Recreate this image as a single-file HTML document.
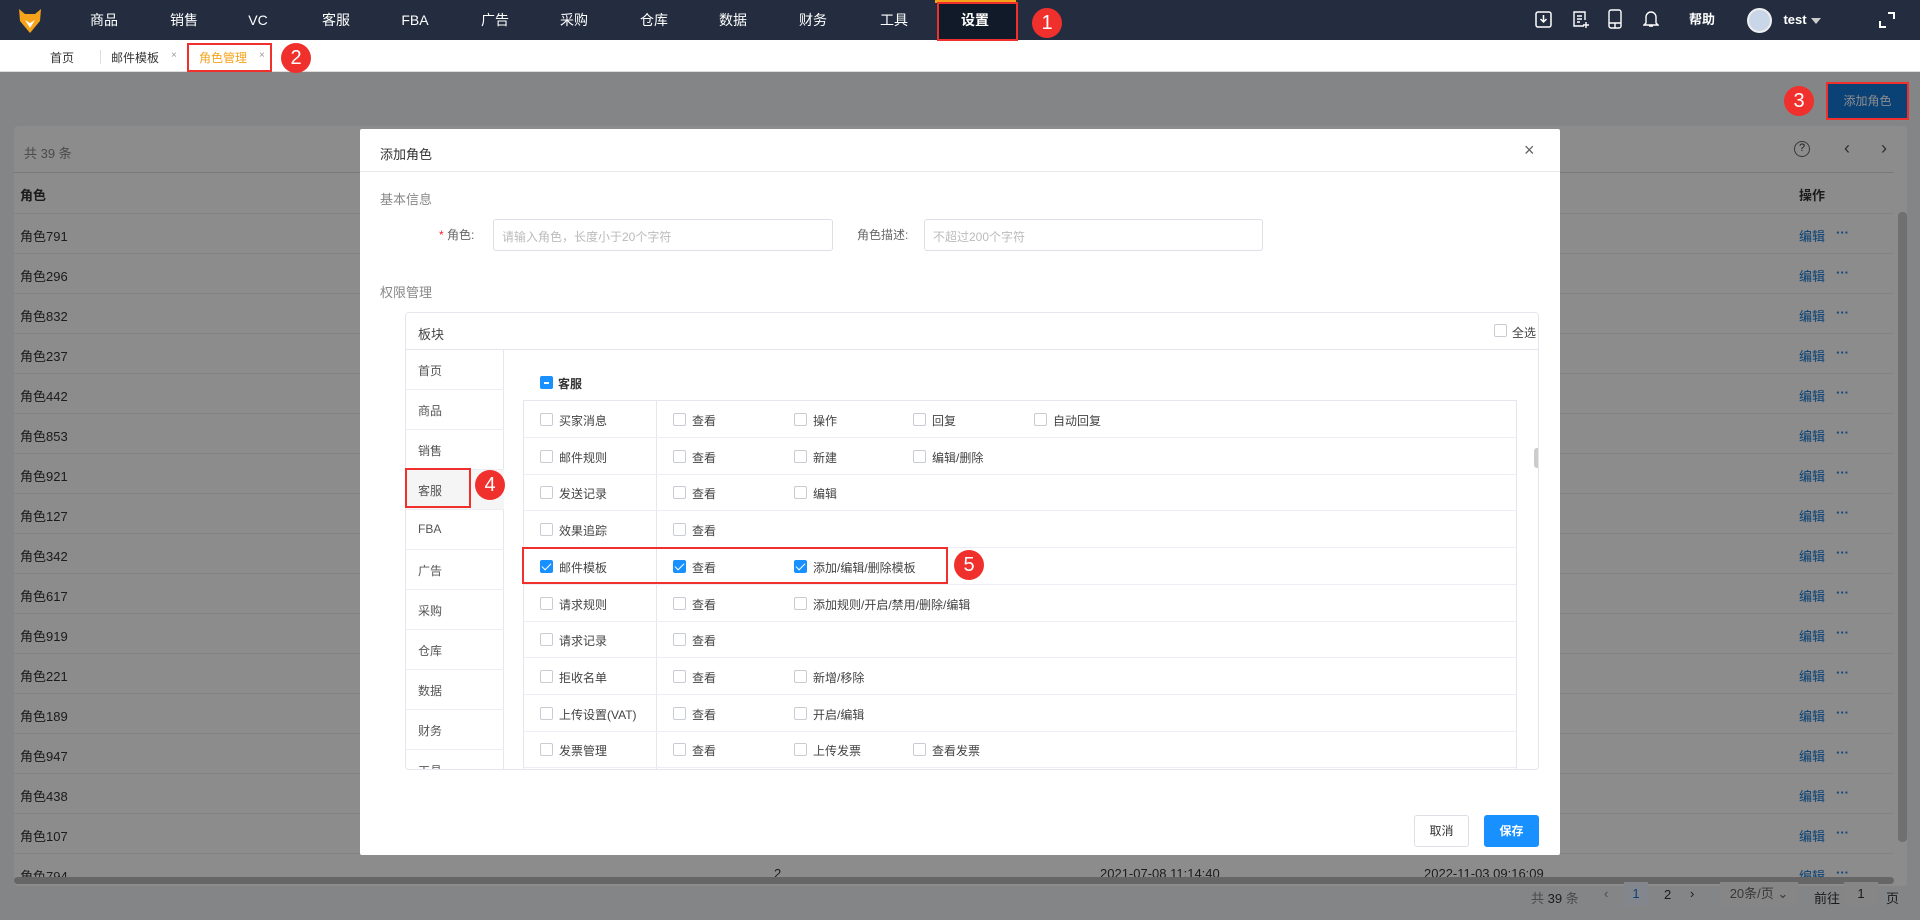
<!DOCTYPE html>
<html><head><meta charset="utf-8"><style>
*{box-sizing:border-box;margin:0;padding:0}
body{width:1920px;height:920px;overflow:hidden;position:relative;background:#fff;font-family:"Liberation Sans","Noto Sans CJK SC",sans-serif;font-size:13px;color:#333}
.a{position:absolute}
.nav{left:0;top:0;width:1920px;height:40px;background:#232d3f}
.nav span{position:absolute;top:0;line-height:40px;color:#fff;font-size:14px;transform:translateX(-50%)}
.tabs{left:0;top:40px;width:1920px;height:32px;background:#fff;border-bottom:1px solid #ddd}
.page{left:0;top:72px;width:1920px;height:848px;background:#f0f2f5}
.card{left:14px;top:126px;width:1893px;height:760px;background:#fff;border-radius:4px}
.row{position:absolute;left:0;width:1880px;height:40px;border-top:1px solid #ebeef5}
.row span{position:absolute;top:12px}
.ov{left:0;top:72px;width:1920px;height:848px;background:rgba(0,0,0,0.45)}
.modal{left:360px;top:129px;width:1200px;height:726px;background:#fff;border-radius:2px}
.inp{position:absolute;height:32px;border:1px solid #dcdfe6;border-radius:3px;color:#bbb;font-size:12px;padding:8px}
.cb{position:absolute;width:13px;height:13px;border:1px solid #c9ccd3;border-radius:2px;background:#fff}
.cb.on{background:#1890ff;border-color:#1890ff}
.cb.on:after{content:"";position:absolute;left:3px;top:0px;width:4px;height:8px;border:solid #fff;border-width:0 1.5px 1.5px 0;transform:rotate(45deg)}
.t{position:absolute;font-size:12px;color:#444}
.red{position:absolute;border:2px solid #f0302c}
.circ{position:absolute;width:30px;height:30px;border-radius:50%;background:#f0302c;color:#fff;font-size:20px;line-height:30px;text-align:center}
.lm{position:absolute;left:0;width:98px;height:40px;border-bottom:1px solid #ebeef5;font-size:12px;color:#555;padding:12px 0 0 12px}
.pr{position:absolute;left:0;width:993px;height:37px;border-bottom:1px solid #ebeef5}
</style></head><body>
<div class="a nav">
 <svg class="a" style="left:18px;top:8px" width="24" height="26" viewBox="0 0 24 26"><path d="M1 1 L7 6 L17 6 L23 1 L22 13 L12 25 L2 13Z" fill="#f5a31a"/><path d="M7 12 L12 20 L17 12 L12 15Z" fill="#fff"/></svg>
 <span style="left:104px">商品</span><span style="left:184px">销售</span><span style="left:258px">VC</span><span style="left:336px">客服</span><span style="left:415px">FBA</span><span style="left:495px">广告</span><span style="left:574px">采购</span><span style="left:654px">仓库</span><span style="left:733px">数据</span><span style="left:813px">财务</span><span style="left:894px">工具</span>
 <div class="a" style="left:937px;top:2px;width:81px;height:38px;background:#111a28"></div>
 <div class="a" style="left:935px;top:0;width:81px;height:3px;background:#f5a31a"></div>
 <span style="left:975px;font-weight:bold">设置</span>
 <svg class="a" style="left:1535px;top:11px" width="17" height="17"><rect x="1" y="1" width="15" height="15" rx="2" fill="none" stroke="#fff" stroke-width="1.5"/><path d="M8.5 4v7M5.5 8l3 3 3-3" fill="none" stroke="#fff" stroke-width="1.5"/></svg>
 <svg class="a" style="left:1572px;top:10px" width="18" height="19"><path d="M12 16H2V2h11v8M5 6h5M5 9h5M5 12h3M14 12v6M11 15h6" fill="none" stroke="#fff" stroke-width="1.4"/></svg>
 <svg class="a" style="left:1608px;top:9px" width="14" height="20"><rect x="1" y="1" width="12" height="18" rx="2" fill="none" stroke="#fff" stroke-width="1.4"/><path d="M1 14h12M7 14v5" stroke="#fff" stroke-width="1.4"/></svg>
 <svg class="a" style="left:1643px;top:9px" width="16" height="19"><path d="M3 14V8a5 5 0 0110 0v6l2 2H1z M6 17h4" fill="none" stroke="#fff" stroke-width="1.4"/></svg>
 <span style="left:1702px;font-size:13px;font-weight:bold">帮助</span>
 <div class="a" style="left:1747px;top:8px;width:25px;height:25px;border-radius:50%;background:#c9d6e8;border:2px solid #eee"></div>
 <span style="left:1795px;font-size:13px;font-weight:bold">test</span>
 <div class="a" style="left:1811px;top:18px;border:5px solid transparent;border-top:6px solid #ccc"></div>
 <svg class="a" style="left:1878px;top:11px" width="18" height="18"><path d="M10 2h6v6M2 10v6h6" fill="none" stroke="#fff" stroke-width="2"/></svg>
</div>
<div class="a tabs">
 <span class="a" style="left:50px;top:9px;font-size:12px">首页</span>
 <div class="a" style="left:100px;top:10px;width:1px;height:14px;background:#ddd"></div>
 <span class="a" style="left:111px;top:9px;font-size:12px">邮件模板</span><span class="a" style="left:171px;top:10px;font-size:10px;color:#999">×</span>
 <span class="a" style="left:199px;top:9px;font-size:12px;color:#f5a31a">角色管理</span><span class="a" style="left:259px;top:10px;font-size:10px;color:#999">×</span>
</div>
<div class="a page">
 <div class="a" style="left:1828px;top:12px;width:79px;height:34px;background:#1479d8;color:#fff;text-align:center;line-height:34px;font-size:12px">添加角色</div>
</div>
<div class="a card">
 <span class="a" style="left:10px;top:17px;color:#888">共 39 条</span>
 <span class="a" style="left:1780px;top:15px;width:16px;height:16px;border:1.5px solid #666;border-radius:50%;font-size:11px;text-align:center;line-height:13px">?</span>
 <span class="a" style="left:1830px;top:12px;font-size:18px;color:#555">‹</span><span class="a" style="left:1867px;top:12px;font-size:18px;color:#555">›</span>
 <div class="row" style="top:46px;border-top:1px solid #ddd"><span style="left:6px;font-weight:bold">角色</span><span style="left:1785px;font-weight:bold">操作</span></div>
 <div id="rows"></div>
 <div class="a" style="left:0;top:751px;width:1880px;height:7px;background:#bbb;border-radius:4px"></div>
 <span class="a" style="left:1517px;top:762px;color:#888">共 <b style="color:#333;font-weight:normal">39</b> 条</span>
 <span class="a" style="left:1590px;top:760px;color:#888">‹</span>
 <span class="a" style="left:1610px;top:756px;width:24px;height:24px;background:#eef5ff;color:#1479d8;text-align:center;line-height:24px">1</span>
 <span class="a" style="left:1650px;top:761px">2</span><span class="a" style="left:1676px;top:760px">›</span>
 <span class="a" style="left:1706px;top:756px;width:78px;height:24px;background:#f5f5f5;text-align:center;line-height:24px;color:#666">20条/页 ⌄</span>
 <span class="a" style="left:1800px;top:762px">前往</span><span class="a" style="left:1830px;top:756px;width:34px;height:24px;background:#f5f5f5;text-align:center;line-height:24px">1</span><span class="a" style="left:1872px;top:762px">页</span>
 <div class="a" style="left:1884px;top:86px;width:9px;height:630px;background:#ccc;border-radius:4px"></div>
</div>
<script>
var n=[791,296,832,237,442,853,921,127,342,617,919,221,189,947,438,107,794],h='';
n.forEach(function(v,i){h+='<div class="row" style="top:'+(87+i*40)+'px"><span style="left:6px">角色'+v+'</span>'+(i==16?'<span style="left:760px">2</span><span style="left:1086px">2021-07-08 11:14:40</span><span style="left:1410px">2022-11-03 09:16:09</span>':'')+'<span style="left:1785px;color:#1479d8">编辑</span><span style="left:1822px;color:#1479d8;font-weight:bold;top:11px">···</span></div>'});
document.getElementById('rows').innerHTML=h;
</script>
<div class="a ov"></div>
<div class="a modal">
 <span class="a" style="left:20px;top:15px;font-size:13px">添加角色</span>
 <span class="a" style="left:1164px;top:11px;font-size:18px;color:#666">×</span>
 <div class="a" style="left:0;top:42px;width:1200px;height:1px;background:#e8e8e8"></div>
 <span class="a" style="left:20px;top:60px;color:#888">基本信息</span>
 <span class="a" style="left:79px;top:97px;font-size:12px;color:#666"><b style="color:#f5222d;font-weight:normal">*</b> 角色:</span>
 <div class="inp" style="left:133px;top:90px;width:340px">请输入角色，长度小于20个字符</div>
 <span class="a" style="left:497px;top:97px;font-size:12px;color:#666">角色描述:</span>
 <div class="inp" style="left:564px;top:90px;width:339px">不超过200个字符</div>
 <span class="a" style="left:20px;top:153px;color:#888">权限管理</span>
 <div class="a" style="left:45px;top:183px;width:1134px;height:458px;border:1px solid #e4e7ed;border-radius:4px;overflow:hidden">
  <div class="a" style="left:0;top:0;width:1134px;height:37px;border-bottom:1px solid #e4e7ed"><span class="t" style="left:12px;top:11px;font-size:13px">板块</span><div class="cb" style="left:1088px;top:11px"></div><span class="t" style="left:1106px;top:11px">全选</span></div>
  <div class="a" style="left:0;top:37px;width:98px;height:421px;border-right:1px solid #e4e7ed">
   <div class="lm" style="top:0">首页</div><div class="lm" style="top:40px">商品</div><div class="lm" style="top:80px">销售</div><div class="lm" style="top:120px;background:#f5f5f5">客服</div><div class="lm" style="top:160px">FBA</div><div class="lm" style="top:200px">广告</div><div class="lm" style="top:240px">采购</div><div class="lm" style="top:280px">仓库</div><div class="lm" style="top:320px">数据</div><div class="lm" style="top:360px">财务</div><div class="lm" style="top:400px">工具</div>
  </div>
  <div class="cb" style="left:134px;top:63px;background:#1890ff;border-color:#1890ff"><div style="position:absolute;left:3px;top:5px;width:5px;height:1.5px;background:#fff"></div></div>
  <span class="t" style="left:152px;top:62px;font-weight:bold;color:#333">客服</span>
  <div class="a" style="left:117px;top:87px;width:994px;height:371px;border:1px solid #e4e7ed;border-bottom:none">
   <div class="a" style="left:132px;top:0;width:1px;height:371px;background:#e4e7ed"></div>
   <div id="pr"></div>
  </div>
  <div class="a" style="left:1128px;top:135px;width:6px;height:20px;background:#ccc;border-radius:3px"></div>
 </div>
 <div class="a" style="left:1054px;top:686px;width:55px;height:32px;border:1px solid #dcdfe6;border-radius:3px;text-align:center;line-height:30px;font-size:12px">取消</div>
 <div class="a" style="left:1124px;top:686px;width:55px;height:32px;background:#1890ff;border-radius:3px;text-align:center;line-height:32px;font-size:12px;color:#fff;font-weight:bold">保存</div>
</div>
<script>
var P=[["买家消息",0,["查看","操作","回复","自动回复"]],["邮件规则",0,["查看","新建","编辑/删除"]],["发送记录",0,["查看","编辑"]],["效果追踪",0,["查看"]],["邮件模板",1,["查看","添加/编辑/删除模板"]],["请求规则",0,["查看","添加规则/开启/禁用/删除/编辑"]],["请求记录",0,["查看"]],["拒收名单",0,["查看","新增/移除"]],["上传设置(VAT)",0,["查看","开启/编辑"]],["发票管理",0,["查看","上传发票","查看发票"]]],x=[149,270,389,510],s='';
P.forEach(function(r,i){var c=r[1]?' on':'';s+='<div class="pr" style="top:'+(i*36.7)+'px"><div class="cb'+c+'" style="left:16px;top:12px"></div><span class="t" style="left:35px;top:11px">'+r[0]+'</span>';
r[2].forEach(function(t,j){s+='<div class="cb'+(r[1]&&j<2?' on':'')+'" style="left:'+x[j]+'px;top:12px"></div><span class="t" style="left:'+(x[j]+19)+'px;top:11px">'+t+'</span>'});s+='</div>'});
document.getElementById('pr').innerHTML=s;
</script>
<div class="red" style="left:937px;top:2px;width:81px;height:39px"></div><div class="circ" style="left:1032px;top:8px">1</div>
<div class="red" style="left:187px;top:43px;width:85px;height:29px"></div><div class="circ" style="left:281px;top:43px">2</div>
<div class="red" style="left:1826px;top:82px;width:83px;height:38px"></div><div class="circ" style="left:1784px;top:86px">3</div>
<div class="red" style="left:405px;top:468px;width:66px;height:40px"></div><div class="circ" style="left:475px;top:470px">4</div>
<div class="red" style="left:522px;top:547px;width:426px;height:37px"></div><div class="circ" style="left:954px;top:550px">5</div>
</body></html>
